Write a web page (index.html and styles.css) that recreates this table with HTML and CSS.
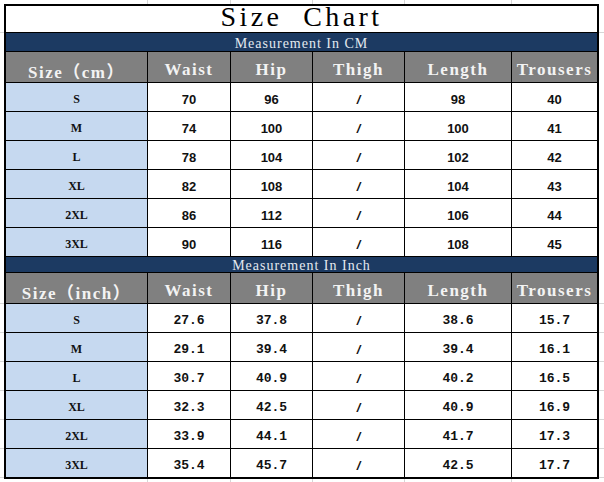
FILE: index.html
```html
<!DOCTYPE html>
<html>
<head>
<meta charset="utf-8">
<link rel="stylesheet" href="styles.css">
</head>
<body>
<div class="sheet">
  <div class="title">Size&nbsp;&nbsp;Chart</div>

  <div class="band">Measurement In CM</div>
  <div class="hd">Size（cm）</div><div class="hd">Waist</div><div class="hd">Hip</div><div class="hd">Thigh</div><div class="hd">Length</div><div class="hd">Trousers</div>

  <div class="sz">S</div><div class="cm">70</div><div class="cm">96</div><div class="sl">/</div><div class="cm">98</div><div class="cm">40</div>
  <div class="sz">M</div><div class="cm">74</div><div class="cm">100</div><div class="sl">/</div><div class="cm">100</div><div class="cm">41</div>
  <div class="sz">L</div><div class="cm">78</div><div class="cm">104</div><div class="sl">/</div><div class="cm">102</div><div class="cm">42</div>
  <div class="sz">XL</div><div class="cm">82</div><div class="cm">108</div><div class="sl">/</div><div class="cm">104</div><div class="cm">43</div>
  <div class="sz">2XL</div><div class="cm">86</div><div class="cm">112</div><div class="sl">/</div><div class="cm">106</div><div class="cm">44</div>
  <div class="sz">3XL</div><div class="cm">90</div><div class="cm">116</div><div class="sl">/</div><div class="cm">108</div><div class="cm">45</div>

  <div class="band band-inch">Measurement In Inch</div>
  <div class="hd">Size（inch）</div><div class="hd">Waist</div><div class="hd">Hip</div><div class="hd">Thigh</div><div class="hd">Length</div><div class="hd">Trousers</div>

  <div class="sz">S</div><div class="in">27.6</div><div class="in">37.8</div><div class="sl">/</div><div class="in">38.6</div><div class="in">15.7</div>
  <div class="sz">M</div><div class="in">29.1</div><div class="in">39.4</div><div class="sl">/</div><div class="in">39.4</div><div class="in">16.1</div>
  <div class="sz">L</div><div class="in">30.7</div><div class="in">40.9</div><div class="sl">/</div><div class="in">40.2</div><div class="in">16.5</div>
  <div class="sz">XL</div><div class="in">32.3</div><div class="in">42.5</div><div class="sl">/</div><div class="in">40.9</div><div class="in">16.9</div>
  <div class="sz">2XL</div><div class="in">33.9</div><div class="in">44.1</div><div class="sl">/</div><div class="in">41.7</div><div class="in">17.3</div>
  <div class="sz">3XL</div><div class="in">35.4</div><div class="in">45.7</div><div class="sl">/</div><div class="in">42.5</div><div class="in">17.7</div>
</div>
</body>
</html>
```
FILE: styles.css
```css
html, body {
  margin: 0;
  padding: 0;
}
body {
  width: 604px;
  height: 482px;
  overflow: hidden;
  background-color: #fff;
  background-image:
    linear-gradient(90deg, transparent 147px, #d6d6d6 147px, #d6d6d6 148px, transparent 148px),
    linear-gradient(90deg, transparent 230px, #d6d6d6 230px, #d6d6d6 231px, transparent 231px),
    linear-gradient(90deg, transparent 312px, #d6d6d6 312px, #d6d6d6 313px, transparent 313px),
    linear-gradient(90deg, transparent 404px, #d6d6d6 404px, #d6d6d6 405px, transparent 405px),
    linear-gradient(90deg, transparent 511px, #d6d6d6 511px, #d6d6d6 512px, transparent 512px),
    linear-gradient(180deg, transparent 32px, #d6d6d6 32px, #d6d6d6 33px, transparent 33px),
    linear-gradient(180deg, transparent 303px, #d6d6d6 303px, #d6d6d6 304px, transparent 304px),
    repeating-linear-gradient(180deg, transparent 0, transparent 28px, #d6d6d6 28px, #d6d6d6 29px);
  background-size: 100% 100%, 100% 100%, 100% 100%, 100% 100%, 100% 100%, 100% 100%, 100% 100%, 100% 174px;
  background-position: 0 0, 0 0, 0 0, 0 0, 0 0, 0 0, 0 0, 0 304px;
  background-repeat: no-repeat;
}

.sheet {
  box-sizing: border-box;
  width: 595px;
  margin: 4px 0 0 4px;
  border: 2px solid #000;
  background: #000;
  display: grid;
  grid-template-columns: 141px 82px 81px 91px 106px 85px;
  grid-template-rows: 26px 18px 30px repeat(6, 28px) 15px 30px repeat(6, 28px);
  gap: 1px;
}

.sheet > div {
  box-sizing: border-box;
  display: flex;
  align-items: center;
  justify-content: center;
  white-space: nowrap;
  min-width: 0;
  min-height: 0;
}

.title {
  grid-column: 1 / -1;
  background: #fff;
  color: #000;
  font-family: "Liberation Serif", "Noto Sans CJK SC", serif;
  font-size: 28px;
  line-height: 26px;
  letter-spacing: 3.4px;
  padding-bottom: 5px;
}

.band {
  grid-column: 1 / -1;
  background: #1c3a62;
  color: #e4e9f0;
  font-family: "Liberation Serif", "Noto Sans CJK SC", serif;
  font-size: 14px;
  line-height: 14px;
  letter-spacing: 1px;
  padding-top: 4px;
}

.band-inch {
  padding-top: 3px;
}

.hd {
  background: #808080;
  color: #f3f3f3;
  font-family: "Liberation Serif", "Noto Sans CJK SC", serif;
  font-weight: bold;
  font-size: 17px;
  letter-spacing: 1.5px;
  padding-top: 6px;
}

.sz {
  background: #c6d9f0;
  color: #111;
  font-family: "Liberation Serif", serif;
  font-weight: bold;
  font-size: 12px;
  padding-top: 4px;
}

.cm {
  background: #fff;
  color: #111;
  font-family: "Liberation Sans", sans-serif;
  font-weight: bold;
  font-size: 13px;
  padding-top: 4px;
}

.in {
  background: #fff;
  color: #111;
  font-family: "Liberation Mono", monospace;
  font-weight: bold;
  font-size: 13px;
  padding-top: 5px;
}

.sl {
  background: #fff;
  color: #111;
  font-family: "Liberation Sans", sans-serif;
  font-weight: bold;
  font-style: italic;
  font-size: 13px;
  padding-top: 4px;
}
```
